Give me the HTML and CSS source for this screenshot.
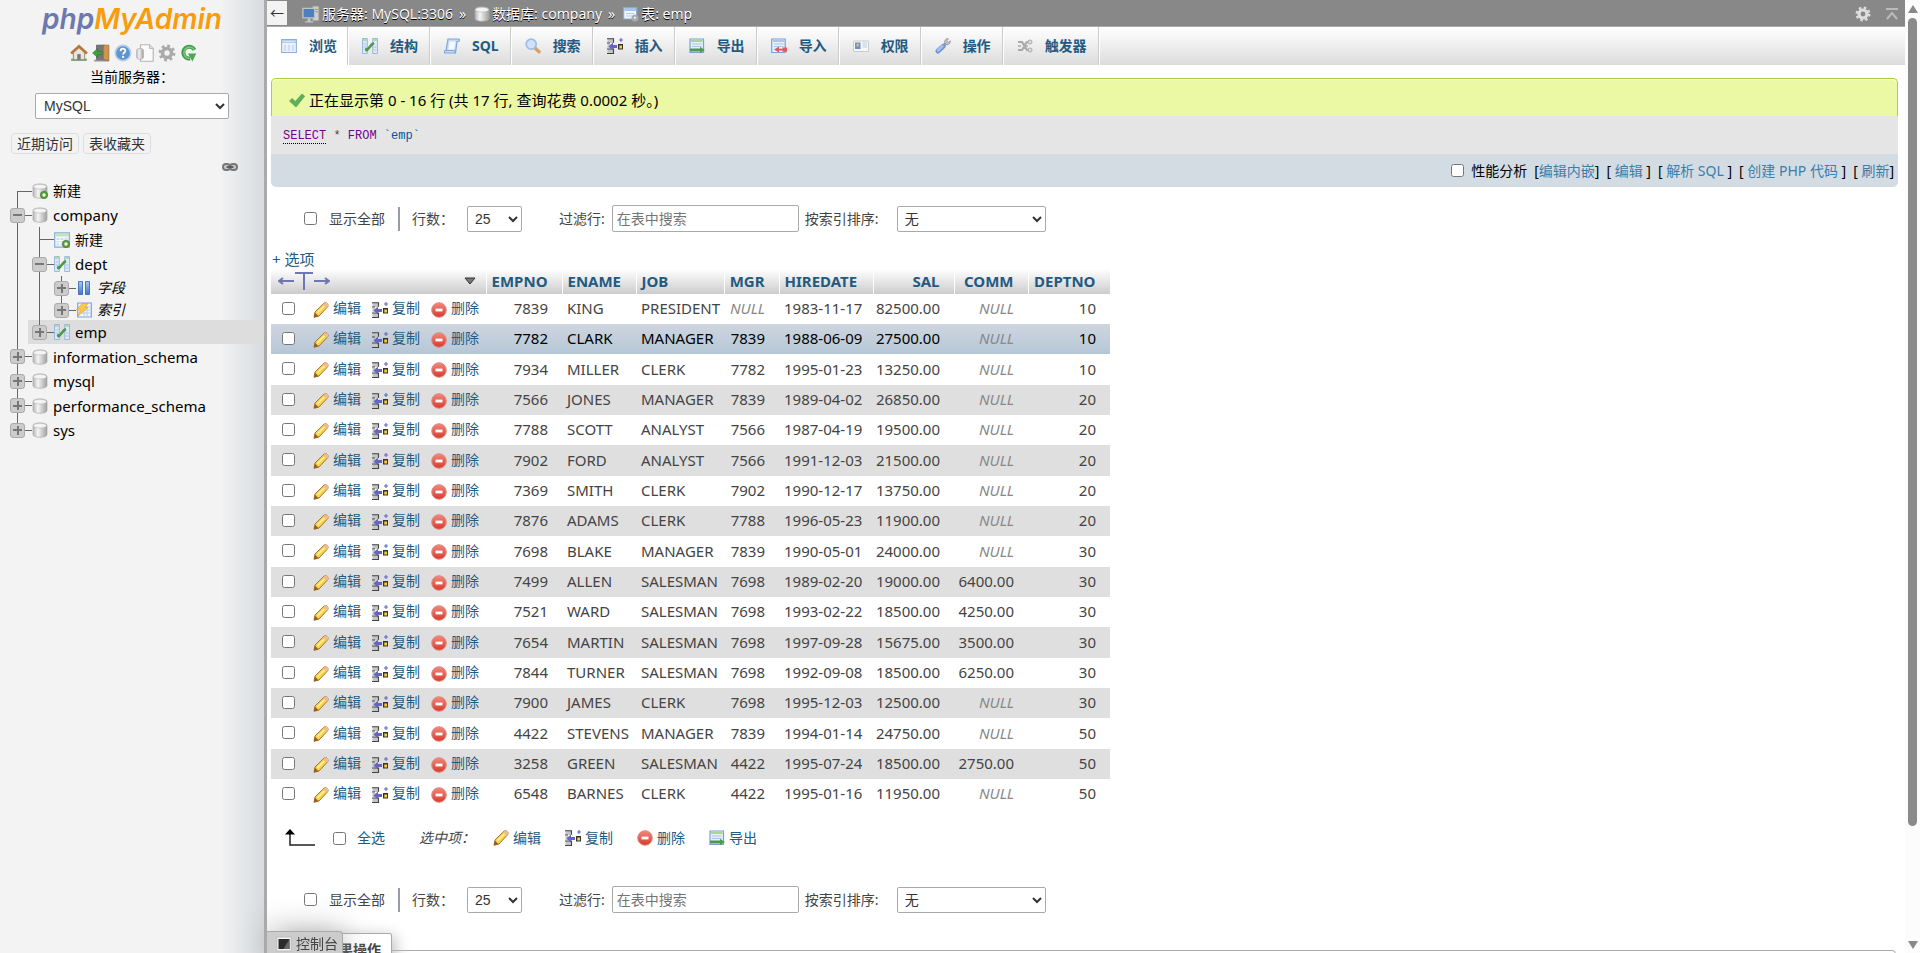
FILE: index.html
```
<!DOCTYPE html>
<html lang="zh-CN">

<head>
  <meta charset="UTF-8">
  <meta name="viewport" content="width=device-width, initial-scale=1.0">
  <title>MySQL / company / emp | phpMyAdmin</title>
  <link rel="stylesheet" href="styles.css">
</head>

<body>
  <svg class="sprite" aria-hidden="true">
    <defs>
      <linearGradient id="g-cyl" x1="0" x2="1" y1="0" y2="0">
        <stop offset="0" stop-color="#b5b5b5"/><stop offset=".35" stop-color="#f4f4f4"/><stop offset="1" stop-color="#a0a0a0"/>
      </linearGradient>
      <linearGradient id="g-blue" x1="0" x2="0" y1="0" y2="1">
        <stop offset="0" stop-color="#a9c9f2"/><stop offset="1" stop-color="#3f78c4"/>
      </linearGradient>
      <linearGradient id="g-red" x1="0" x2="0" y1="0" y2="1">
        <stop offset="0" stop-color="#f08a7c"/><stop offset="1" stop-color="#d9382c"/>
      </linearGradient>
    </defs>
    <symbol id="i-home" viewBox="0 0 16 16">
      <path d="M1 15h14v-2H1z" fill="#6fa85a"/>
      <path d="M3 7.500 8 3l5 4.500V14H3z" fill="#e8e4de" stroke="#8c8378" stroke-width=".8"/>
      <path d="M6.500 9h3v5h-3z" fill="#777"/>
      <path d="M1 8.500 8 2l7 6.500" fill="none" stroke="#b8763a" stroke-width="2.400"/>
    </symbol>
    <symbol id="i-exit" viewBox="0 0 16 16">
      <path d="M4 1h7v13H4z" fill="#777" stroke="#555" stroke-width=".6"/>
      <path d="M2 14h13v1.500H2z" fill="#8d8d8d"/>
      <path d="M10 1h5v14l-5-1.500z" fill="#d3924f" stroke="#9c6228" stroke-width=".6"/>
      <path d="M.5 8 5 4v2.500h4v3H5V12z" fill="#3da23d" stroke="#28762a" stroke-width=".5"/>
    </symbol>
    <symbol id="i-help" viewBox="0 0 16 16">
      <circle cx="8" cy="8" r="6.800" fill="#5f94d3" stroke="#b4cdea" stroke-width="1.400"/>
      <path d="M5.800 6.300c.2-3 4.600-2.600 4.200 0-.2 1.300-1.900 1.300-1.900 3" fill="none" stroke="#fff" stroke-width="1.600"/>
      <circle cx="8.100" cy="11.500" r="1" fill="#fff"/>
    </symbol>
    <symbol id="i-docs" viewBox="0 0 16 16">
      <path d="M4 .7h8l3.300 3.300v11.300H4z" fill="#fbfbfb" stroke="#b5b5b5"/>
      <path d="M12 .7V4h3.300" fill="#ddd" stroke="#b5b5b5" stroke-width=".8"/>
      <path d="M.6 5.500c0-2 6-2 6 0V12c0 2-6 2-6 0z" fill="url(#g-cyl)" stroke="#aaa" stroke-width=".6"/>
    </symbol>
    <symbol id="i-gear" viewBox="0 0 16 16">
      <circle cx="8" cy="8" r="6.200" fill="none" stroke="currentColor" stroke-width="2.600" stroke-dasharray="2.435 2.435"/>
      <circle cx="8" cy="8" r="4" fill="none" stroke="currentColor" stroke-width="3.200"/>
    </symbol>
    <symbol id="i-reload" viewBox="0 0 16 16">
      <path d="M12.800 5.200A5.200 5.200 0 1 0 9 12.800" fill="none" stroke="#3f9b49" stroke-width="3.600"/>
      <path d="M12.600 5A5 5 0 1 0 8.500 12.800" fill="none" stroke="#7cc67a" stroke-width="1.400"/>
      <path d="M7 8.500h7.500L11 15.500z" fill="#4ea653"/>
    </symbol>
    <symbol id="i-link" viewBox="0 0 16 10">
      <rect x="1" y="2" width="7" height="6" rx="3" fill="#ccc" stroke="#777" stroke-width="2"/>
      <rect x="8" y="2" width="7" height="6" rx="3" fill="#ccc" stroke="#777" stroke-width="2"/>
      <path d="M4.500 5h7" stroke="#555" stroke-width="1.800"/>
    </symbol>
    <symbol id="i-db" viewBox="0 0 16 16">
      <path d="M1 3.500c0-3.500 14-3.500 14 0v9c0 3.700-14 3.700-14 0z" fill="url(#g-cyl)" stroke="#aaa" stroke-width=".7"/>
      <ellipse cx="8" cy="3.700" rx="6.500" ry="2.300" fill="#f4f4f4" stroke="#bbb" stroke-width=".6"/>
    </symbol>
    <symbol id="i-plus" viewBox="0 0 16 16">
      <circle cx="12" cy="12" r="3.700" fill="#5c9a3c" stroke="#3f7526" stroke-width=".6"/>
      <circle cx="12" cy="12" r="1.700" fill="#f1f8ea"/>
    </symbol>
    <symbol id="i-table" viewBox="0 0 16 16">
      <path d="M.7 .8h14.600v14.400H.7z" fill="#f4f8fd" stroke="#86aadb" stroke-width="1.200"/>
      <path d="M1.300 1.500h13.400V4.500H1.300z" fill="#c5e2b8"/>
      <path d="M2.500 6h11v7.500h-11z" fill="#cfdff2"/>
      <path d="M2.500 8.500h11M2.500 11h11M6 6v7.500M10 6v7.500" stroke="#fff" stroke-width=".9"/>
    </symbol>
    <symbol id="i-browse" viewBox="0 0 16 16">
      <path d="M.7 1.500h14.600v13H.7z" fill="#fff" stroke="#8caedb" stroke-width="1.200"/>
      <path d="M1.300 2.200h13.400v3H1.300z" fill="#a5c4ec"/>
      <path d="M2.500 6.500h3v7h-3zM6.500 6.500h3v7h-3zM10.500 6.500h3v7h-3z" fill="#cddff4"/>
      <path d="M2.500 3.700h11" stroke="#e4eefa"/>
    </symbol>
    <symbol id="i-struct" viewBox="0 0 16 16">
      <path d="M.5 .5h4.800v15H.5zM10.700 .5h4.800v15h-4.800z" fill="#dce9f8" stroke="#94b3de" stroke-width=".9"/>
      <path d="M1 2h4M11 2h4" stroke="#b5d9a8" stroke-width="2"/>
      <path d="M1.500 6h3M1.500 9h3M11.500 9h3M11.500 12h3" stroke="#a9c2e4"/>
      <path d="M4 12c3 .5 4-5.500 8-7" fill="none" stroke="#4c9a50" stroke-width="2.600"/>
      <circle cx="4.700" cy="11.600" r="1.900" fill="#4c9a50"/>
    </symbol>
    <symbol id="i-cols" viewBox="0 0 16 16">
      <path d="M2.500 1.500h4v13h-4zM9.500 1.500h4v13h-4z" fill="url(#g-blue)" stroke="#2f62b3" stroke-width=".8"/>
    </symbol>
    <symbol id="i-index" viewBox="0 0 16 16">
      <path d="M1.700 1h13.600v14H1.700z" fill="#f1f6fd" stroke="#7ca4dc" stroke-width="1.200"/>
      <path d="M4 5h10M4 8h10M4 11h10M8 4v10M11 4v10" stroke="#b6cce9"/>
      <path d="M6 1.500h6L9 5.500h3L2 14l2.500-6H.5z" fill="#fbc94a" stroke="#e09a2b" stroke-width=".6"/>
    </symbol>
    <symbol id="i-server" viewBox="0 0 16 16">
      <path d="M9.500 1H15v13H9.500z" fill="#cfcfcf" stroke="#999" stroke-width=".7"/>
      <path d="M11 4h3M11 6h3" stroke="#8a8a8a"/>
      <path d="M.8 3h10.500v8.500H.8z" fill="#4b7fc4" stroke="#c4c4c4" stroke-width="1.200"/>
      <path d="M5 12h2.500v2.500H10v1H2.800v-1H5z" fill="#c5c5c5"/>
    </symbol>
    <symbol id="i-props" viewBox="0 0 16 16">
      <path d="M.7 1.500h13v11.500H.7z" fill="#f4f8fd" stroke="#86aadb" stroke-width="1.200"/>
      <path d="M1.300 2h11.800v3H1.300z" fill="#a5c4ec"/>
      <path d="M3 7.500h8M3 10h6" stroke="#b3cbe8"/>
      <circle cx="12" cy="12" r="2.400" fill="none" stroke="#aaa" stroke-width="2.200"/>
    </symbol>
    <symbol id="i-sql" viewBox="0 0 16 16">
      <path d="M4 1h10.500c1.500 0 1.200 2.500-.5 2.500h-1L11.500 15H1.500C0 15 0 12.500 1.500 12.500H2z" fill="#c5dbf6" stroke="#7ea6de" stroke-width="1.200"/>
      <path d="M2 12.500h8c1.500 0 1.500 2.500 0 2.500" fill="none" stroke="#7ea6de"/>
      <path d="M5.500 3.500h6l-1.300 8H4.300z" fill="#f5f9fe"/>
    </symbol>
    <symbol id="i-search" viewBox="0 0 16 16">
      <path d="m10 10 4 3.800" stroke="#d9a066" stroke-width="3.400" stroke-linecap="round"/>
      <circle cx="6.200" cy="6.200" r="5" fill="#cfe2f8" stroke="#9cbce4" stroke-width="1.700"/>
    </symbol>
    <symbol id="i-insert" viewBox="0 0 16 16">
      <path d="M.5.5H7V5H.5zM.5 11H7v4.500H.5zM.5 6h3v4h-3z" fill="#c4c4c4"/>
      <path d="M0 .7h6.500v4M0 5h3M0 11h6.500v4.500H0" fill="none" stroke="#444" stroke-width="1.100"/>
      <path d="M1.500 8.500 6 4.500V7h4v3H6v2.500z" fill="#6463cc"/>
      <path d="M11 6h5v5.500h-5z" fill="#333"/>
      <path d="M12.300 7.500H15v3h-2.700z" fill="#fc3"/>
      <path d="M14 0v4M12 2h4" stroke="#6463cc" stroke-width="1.100"/>
    </symbol>
    <symbol id="i-export" viewBox="0 0 16 16">
      <path d="M1 1h13.500v13.500H1z" fill="#e6effa" stroke="#7ba1d6" stroke-width="1.200"/>
      <path d="M2 2h11.500v2H2z" fill="#a9d59a"/>
      <path d="M3 6h9.500M3 8.500h9.500" stroke="#aac4e6" stroke-width="1.200"/>
      <path d="M1 10.500h10V8.800l4.700 3.200-4.700 3.200v-1.700H1z" fill="#4d9a4b"/>
    </symbol>
    <symbol id="i-import" viewBox="0 0 16 16">
      <path d="M.7 1h13.500v13.500H.7z" fill="#e6effa" stroke="#7ba1d6" stroke-width="1.200"/>
      <path d="M2 2h11v2H2z" fill="#a9c6ec"/>
      <path d="M3 6h9.500M3 8.500h9.500" stroke="#aac4e6" stroke-width="1.200"/>
      <path d="M16 9.500h-4.500v1.200H8V8.500L3 11.500l5 3v-2h3.500v1.200H16z" fill="#e9555c"/>
    </symbol>
    <symbol id="i-rights" viewBox="0 0 16 16">
      <path d="M.5 3h15v10.500H.5z" fill="#f7f7f7" stroke="#ccc"/>
      <path d="M2 4.500h5.500v6.500H2z" fill="#5f95d6"/>
      <circle cx="4.700" cy="7" r="1.500" fill="#e3b184"/>
      <path d="M9.500 5h4.500M9.500 7h4.500M9.500 9h4.500" stroke="#b9d0ec" stroke-width="1.200"/>
    </symbol>
    <symbol id="i-wrench" viewBox="0 0 16 16">
      <path d="M8 8.500 12 4" stroke="#9c9c9c" stroke-width="3"/>
      <path d="M9.500 4.500c0-3 2.500-4.500 4-3.700L11.700 3l1.500 1.500 2.100-1.700c.6 2-1.300 4.300-4 3.900z" fill="#c2c2c2" stroke="#8e8e8e" stroke-width=".7"/>
      <path d="M3 13 8 8.500" stroke="#6d93d8" stroke-width="5" stroke-linecap="round"/>
      <path d="M3 12.500 7.500 8.200" stroke="#a8c2ee" stroke-width="2.500" stroke-linecap="round"/>
    </symbol>
    <symbol id="i-trigger" viewBox="0 0 16 16">
      <path d="M1 4h4l5 8h4M1 12h4l2-3M8 6.500 10 4h4" fill="none" stroke="#aaa" stroke-width="2.200"/>
      <circle cx="13" cy="4" r="2" fill="#ddd" stroke="#aaa"/>
      <circle cx="13" cy="12" r="2" fill="#ddd" stroke="#aaa"/>
      <path d="M1 8h3M8 8h3" stroke="#aaa" stroke-width="1.500"/>
    </symbol>
    <symbol id="i-ok" viewBox="0 0 16 16">
      <path d="m.5 9 2.700-2.500L6.300 9.500 13 2l2.700 2.200L7 15z" fill="#5fb15c" stroke="#4a9448" stroke-width=".6"/>
    </symbol>
    <symbol id="i-edit" viewBox="0 0 16 16">
      <path d="M1 15.300 2 10 11 1.200c2.200-1.500 5 1 3.700 3.500L6 14z" fill="#f7d448" stroke="#a9702c" stroke-width="1"/>
      <path d="M10.300 2.300 13.800 5.800 15 4c.8-2-1.500-4-3.300-2.900z" fill="#f0bb93"/>
      <path d="M4.500 10.800 11.300 4" stroke="#fdf0a5" stroke-width="1.600"/>
      <path d="M1 15.300 2 10.800 5.500 14.200z" fill="#8f5c2d"/>
    </symbol>
    <symbol id="i-drop" viewBox="0 0 16 16">
      <circle cx="8" cy="8" r="7.300" fill="url(#g-red)" stroke="#e08a80" stroke-width="1"/>
      <path d="M4.500 6.600h7v2.800h-7z" fill="#fff"/>
    </symbol>
    <symbol id="i-console" viewBox="0 0 16 16">
      <path d="M.8 1h14.400v14H.8z" fill="#f4f4f4" stroke="#bbb"/>
      <path d="M2.500 3h11v10h-11z" fill="#2b2b2b"/>
      <path d="M13.500 3v10h-6z" fill="#666"/>
    </symbol>
  </svg>

  <div class="page">
    <aside class="sidebar">
      <a class="logo" href="#"><span class="logo__php">php</span>MyAdmin</a>
      <nav class="shortcuts">
        <a href="#" title="主页"><svg class="icon icon--lg"><use href="#i-home"/></svg></a>
        <a href="#" title="退出"><svg class="icon icon--lg"><use href="#i-exit"/></svg></a>
        <a href="#" title="文档"><svg class="icon icon--lg"><use href="#i-help"/></svg></a>
        <a href="#" title="MySQL 文档"><svg class="icon icon--lg"><use href="#i-docs"/></svg></a>
        <a href="#" title="设置"><svg class="icon icon--lg icon--grey"><use href="#i-gear"/></svg></a>
        <a href="#" title="刷新"><svg class="icon icon--lg"><use href="#i-reload"/></svg></a>
      </nav>
      <label class="server-label" for="server">当前服务器：</label>
      <select class="select server-select" id="server">
        <option>MySQL</option>
      </select>
      <div class="quick">
        <button class="quick__btn">近期访问</button>
        <button class="quick__btn">表收藏夹</button>
      </div>
      <a class="unlink" href="#" title="取消与主面板的链接"><svg class="icon--link"><use href="#i-link"/></svg></a>

      <ul class="tree">
        <li class="node node--new"><span class="gut gut--first"></span><svg class="icon"><use href="#i-db"/><use href="#i-plus"/></svg><a href="#">新建</a></li>
        <li class="node"><span class="gut"><button class="toggle toggle--open"></button></span><svg class="icon"><use href="#i-db"/></svg><a href="#">company</a></li>
        <li class="node node--new node--tall"><span class="gut gut--pass"></span><span class="gut"></span><svg class="icon"><use href="#i-table"/><use href="#i-plus"/></svg><a href="#">新建</a></li>
        <li class="node"><span class="gut gut--pass"></span><span class="gut"><button class="toggle toggle--open"></button></span><svg class="icon"><use href="#i-struct"/></svg><a href="#">dept</a></li>
        <li class="node node--group"><span class="gut gut--pass"></span><span class="gut gut--pass"></span><span class="gut"><button class="toggle"></button></span><svg class="icon"><use href="#i-cols"/></svg><a href="#">字段</a></li>
        <li class="node node--group node--short"><span class="gut gut--pass"></span><span class="gut gut--pass"></span><span class="gut gut--last"><button class="toggle"></button></span><svg class="icon"><use href="#i-index"/></svg><a href="#">索引</a></li>
        <li class="node node--active"><span class="gut gut--pass"></span><span class="gut gut--last"><button class="toggle"></button></span><svg class="icon"><use href="#i-struct"/></svg><a href="#">emp</a></li>
        <li class="node node--tall"><span class="gut"><button class="toggle"></button></span><svg class="icon"><use href="#i-db"/></svg><a href="#">information_schema</a></li>
        <li class="node"><span class="gut"><button class="toggle"></button></span><svg class="icon"><use href="#i-db"/></svg><a href="#">mysql</a></li>
        <li class="node node--tall"><span class="gut"><button class="toggle"></button></span><svg class="icon"><use href="#i-db"/></svg><a href="#">performance_schema</a></li>
        <li class="node"><span class="gut gut--last"><button class="toggle"></button></span><svg class="icon"><use href="#i-db"/></svg><a href="#">sys</a></li>
      </ul>
    </aside>

    <main class="main">
      <header class="topbar">
        <button class="collapse" title="隐藏面板">←</button>
        <div class="crumbs">
          <svg class="icon icon--lg"><use href="#i-server"/></svg><a href="#">服务器: MySQL:3306</a>
          <span class="crumbs__sep">»</span>
          <svg class="icon"><use href="#i-db"/></svg><a href="#">数据库: company</a>
          <span class="crumbs__sep">»</span>
          <svg class="icon"><use href="#i-props"/></svg><a href="#">表: emp</a>
        </div>
        <a class="topbar__gear" href="#" title="页面设置"><svg class="icon"><use href="#i-gear"/></svg></a>
        <a class="topbar__up" href="#" title="返回顶部"><svg class="icon--up" viewBox="0 0 12 12"><path d="M0 1h12M1 11l5-6 5 6" fill="none" stroke="currentColor" stroke-width="2"/></svg></a>
      </header>

      <nav class="tabs">
        <a class="tab tab--active" href="#"><svg class="icon"><use href="#i-browse"/></svg>浏览</a>
        <a class="tab" href="#"><svg class="icon"><use href="#i-struct"/></svg>结构</a>
        <a class="tab" href="#"><svg class="icon"><use href="#i-sql"/></svg>SQL</a>
        <a class="tab" href="#"><svg class="icon"><use href="#i-search"/></svg>搜索</a>
        <a class="tab" href="#"><svg class="icon"><use href="#i-insert"/></svg>插入</a>
        <a class="tab" href="#"><svg class="icon"><use href="#i-export"/></svg>导出</a>
        <a class="tab" href="#"><svg class="icon"><use href="#i-import"/></svg>导入</a>
        <a class="tab" href="#"><svg class="icon"><use href="#i-rights"/></svg>权限</a>
        <a class="tab" href="#"><svg class="icon"><use href="#i-wrench"/></svg>操作</a>
        <a class="tab" href="#"><svg class="icon"><use href="#i-trigger"/></svg>触发器</a>
      </nav>

      <div class="content">
        <section class="result">
          <div class="result__msg"><svg class="icon"><use href="#i-ok"/></svg>正在显示第 0 - 16 行 (共 17 行, 查询花费 0.0002 秒。)</div>
          <div class="result__sql"><code><a class="kw kw--doc" href="#">SELECT</a> * <span class="kw">FROM</span> <span class="name">`emp`</span></code></div>
          <div class="result__tools">
            <input type="checkbox" class="check" id="profiling"><label for="profiling">性能分析</label>
            <span>[<a href="#">编辑内嵌</a>]</span>
            <span>[ <a href="#">编辑</a> ]</span>
            <span>[ <a href="#">解析 SQL</a> ]</span>
            <span>[ <a href="#">创建 PHP 代码</a> ]</span>
            <span>[ <a href="#">刷新</a>]</span>
          </div>
        </section>

        <form class="filters">
          <input type="checkbox" class="check" id="all-1"><label class="filters__all" for="all-1">显示全部</label>
          <label class="filters__rows" for="rows-1">行数：</label>
          <select class="select filters__count" id="rows-1"><option>25</option></select>
          <label class="filters__search" for="search-1">过滤行:</label>
          <input type="text" class="filters__text" id="search-1" placeholder="在表中搜索">
          <label class="filters__sort" for="sort-1">按索引排序:</label>
          <select class="select filters__key" id="sort-1"><option>无</option></select>
        </form>

        <a class="options" href="#">+ 选项</a>

        <table class="data">
          <colgroup>
            <col class="w-actions"><col class="w-empno"><col class="w-ename"><col class="w-job"><col class="w-mgr">
            <col class="w-hire"><col class="w-sal"><col class="w-comm"><col class="w-dept">
          </colgroup>
          <thead>
            <tr>
              <th>
                <div class="head-tools">
                  <svg class="t-arrows" viewBox="0 0 52 18"><path d="M1 9h15M5 6 1 9l4 3M17 1h18M26 1v17M36 9h15M47 6l4 3-4 3" fill="none" stroke="#6c78af" stroke-width="2"/></svg>
                  <svg class="sort" viewBox="0 0 12 8"><path d="M1 1h10L6 7z" fill="#777" stroke="#333"/></svg>
                </div>
              </th>
              <th class="num"><a href="#">EMPNO</a></th>
              <th><a href="#">ENAME</a></th>
              <th><a href="#">JOB</a></th>
              <th class="num"><a href="#">MGR</a></th>
              <th><a href="#">HIREDATE</a></th>
              <th class="num"><a href="#">SAL</a></th>
              <th class="num"><a href="#">COMM</a></th>
              <th class="num"><a href="#">DEPTNO</a></th>
            </tr>
          </thead>
          <tbody id="rows"></tbody>
        </table>

        <div class="bulk">
          <svg class="bulk__arrow" viewBox="0 0 32 18"><path d="M6 4v12h25" fill="none" stroke="#222" stroke-width="1.500"/><path d="M1 5.500 6 0l5 5.500z" fill="#000"/></svg>
          <input type="checkbox" class="check" id="check-all"><label class="bulk__all" for="check-all">全选</label>
          <em class="bulk__with">选中项：</em>
          <button class="bulk__btn"><svg class="icon"><use href="#i-edit"/></svg>编辑</button>
          <button class="bulk__btn"><svg class="icon"><use href="#i-insert"/></svg>复制</button>
          <button class="bulk__btn"><svg class="icon"><use href="#i-drop"/></svg>删除</button>
          <button class="bulk__btn"><svg class="icon"><use href="#i-export"/></svg>导出</button>
        </div>

        <form class="filters">
          <input type="checkbox" class="check" id="all-2"><label class="filters__all" for="all-2">显示全部</label>
          <label class="filters__rows" for="rows-2">行数：</label>
          <select class="select filters__count" id="rows-2"><option>25</option></select>
          <label class="filters__search" for="search-2">过滤行:</label>
          <input type="text" class="filters__text" id="search-2" placeholder="在表中搜索">
          <label class="filters__sort" for="sort-2">按索引排序:</label>
          <select class="select filters__key" id="sort-2"><option>无</option></select>
        </form>

        <fieldset class="operations">
          <legend>查询结果操作</legend>
        </fieldset>
      </div>

      <button class="console"><svg class="icon"><use href="#i-console"/></svg>控制台</button>
    </main>

    <div class="scroll">
      <span class="scroll__up"></span>
      <span class="scroll__track"><span class="scroll__thumb"></span></span>
      <span class="scroll__down"></span>
    </div>
  </div>

  <script>
    const rows = [
      [7839, 'KING', 'PRESIDENT', null, '1983-11-17', '82500.00', null, 10],
      [7782, 'CLARK', 'MANAGER', 7839, '1988-06-09', '27500.00', null, 10],
      [7934, 'MILLER', 'CLERK', 7782, '1995-01-23', '13250.00', null, 10],
      [7566, 'JONES', 'MANAGER', 7839, '1989-04-02', '26850.00', null, 20],
      [7788, 'SCOTT', 'ANALYST', 7566, '1987-04-19', '19500.00', null, 20],
      [7902, 'FORD', 'ANALYST', 7566, '1991-12-03', '21500.00', null, 20],
      [7369, 'SMITH', 'CLERK', 7902, '1990-12-17', '13750.00', null, 20],
      [7876, 'ADAMS', 'CLERK', 7788, '1996-05-23', '11900.00', null, 20],
      [7698, 'BLAKE', 'MANAGER', 7839, '1990-05-01', '24000.00', null, 30],
      [7499, 'ALLEN', 'SALESMAN', 7698, '1989-02-20', '19000.00', '6400.00', 30],
      [7521, 'WARD', 'SALESMAN', 7698, '1993-02-22', '18500.00', '4250.00', 30],
      [7654, 'MARTIN', 'SALESMAN', 7698, '1997-09-28', '15675.00', '3500.00', 30],
      [7844, 'TURNER', 'SALESMAN', 7698, '1992-09-08', '18500.00', '6250.00', 30],
      [7900, 'JAMES', 'CLERK', 7698, '1995-12-03', '12500.00', null, 30],
      [4422, 'STEVENS', 'MANAGER', 7839, '1994-01-14', '24750.00', null, 50],
      [3258, 'GREEN', 'SALESMAN', 4422, '1995-07-24', '18500.00', '2750.00', 50],
      [6548, 'BARNES', 'CLERK', 4422, '1995-01-16', '11950.00', null, 50]
    ];
    const numeric = [0, 3, 5, 6, 7];
    const actions = [['edit', '编辑'], ['insert', '复制'], ['drop', '删除']];

    function cell(value, i) {
      const cls = numeric.includes(i) ? 'num' : '';
      return `<td class="${cls}">${value === null ? '<i class="null">NULL</i>' : value}</td>`;
    }

    function actionLink([icon, text]) {
      return `<a class="action" href="#"><svg class="icon"><use href="#i-${icon}"/></svg>${text}</a>`;
    }

    document.querySelector('#rows').innerHTML = rows.map((row, i) => `
      <tr class="${i === 1 ? 'marked' : ''}">
        <td><div class="actions">
          <input type="checkbox" class="check" aria-label="${row[0]}">
          ${actions.map(actionLink).join('')}
        </div></td>
        ${row.map(cell).join('')}
      </tr>`).join('');
  </script>
</body>

</html>
```
FILE: styles.css
```
* {
  box-sizing: border-box;
}

body {
  margin: 0;
  font-family: "Noto Sans", "Noto Sans CJK SC", sans-serif;
  font-size: 14px;
  line-height: 20px;
  color: #444;
  background: #fff;
}

a {
  color: #235a81;
  text-decoration: none;
}

button,
input,
select {
  font: inherit;
  color: inherit;
}

.sprite {
  position: absolute;
  width: 0;
  height: 0;
}

.icon {
  display: block;
  flex: none;
  width: 16px;
  height: 16px;
}

.icon--lg {
  width: 18px;
  height: 18px;
}

.icon--grey {
  color: #aaa;
}

.check {
  flex: none;
  width: 13px;
  height: 13px;
  margin: 0;
}

.select {
  height: 26px;
  padding: 0 3px;
  font-family: "Liberation Sans", "Noto Sans CJK SC", sans-serif;
  color: #333;
  background: #fff;
  border: 1px solid #aaa;
  border-radius: 2px;
}

.page {
  display: flex;
  height: 100vh;
  overflow: hidden;
}

/* navigation panel */

.sidebar {
  display: flex;
  flex-direction: column;
  flex: none;
  width: 267px;
  padding-top: 3px;
  background: linear-gradient(to right, #f3f3f3 220px, #d7dbdf 264px);
  border-right: 3px solid #aaa;
  color: #000;
}

.logo {
  align-self: center;
  font-family: Inter, sans-serif;
  font-size: 28px;
  font-style: italic;
  font-weight: 600;
  line-height: 32px;
  color: #f89c0e;
}

.logo__php {
  color: #6c78af;
}

.shortcuts {
  display: flex;
  justify-content: center;
  gap: 4px;
  margin-top: 9px;
  padding-left: 4px;
}

.server-label {
  margin-top: 5px;
  text-align: center;
}

.server-select {
  width: 194px;
  margin: 6px 0 0 35px;
  padding: 0 4px;
}

.quick {
  display: flex;
  gap: 4px;
  margin: 14px 0 0 11px;
}

.quick__btn {
  height: 21px;
  padding: 0 5px;
  line-height: 18px;
  color: #333;
  background: #f3f3f3;
  border: 1px solid #ddd;
  border-radius: 4px;
}

.unlink {
  align-self: flex-end;
  height: 10px;
  margin: 8px 26px 7px 0;
}

.icon--link {
  display: block;
  width: 16px;
  height: 10px;
}

.tree {
  margin: 0;
  padding: 0;
  list-style: none;
}

.node {
  display: flex;
  align-items: center;
  height: 24px;
  padding-left: 10px;
  font-size: 15px;
}

.node--tall {
  height: 25px;
}

.node--short {
  height: 20px;
}

.node--new {
  font-size: 14px;
}

.node--group {
  font-size: 14px;
  font-style: italic;
}

.node--active {
  background: linear-gradient(to right, transparent 28px, #ddd 28px);
}

.node a {
  margin-left: 5px;
  color: #000;
}

/* the connecting lines run through 22px wide gutters, one per level */
.gut {
  display: flex;
  align-items: center;
  align-self: stretch;
  flex: none;
  width: 22px;
  background:
    linear-gradient(#666, #666) 7px 0 / 1px 100% no-repeat,
    linear-gradient(#666, #666) 7px 50% / 15px 1px no-repeat;
}

.gut--pass {
  background: linear-gradient(#666, #666) 7px 0 / 1px 100% no-repeat;
}

.gut--first {
  background:
    linear-gradient(#666, #666) 7px 100% / 1px 50% no-repeat,
    linear-gradient(#666, #666) 7px 50% / 15px 1px no-repeat;
}

.gut--last {
  background:
    linear-gradient(#666, #666) 7px 0 / 1px 50% no-repeat,
    linear-gradient(#666, #666) 7px 50% / 15px 1px no-repeat;
}

.node--group .gut--pass + .gut--pass {
  background: linear-gradient(#666, #666) 7px 0 / 1px 100% no-repeat;
}

.toggle {
  width: 15px;
  height: 15px;
  padding: 0;
  border: 1px solid #aaa;
  border-radius: 3px;
  background:
    linear-gradient(#777, #777) center / 9px 2px no-repeat,
    linear-gradient(#777, #777) center / 2px 9px no-repeat,
    #ccc;
}

.toggle--open {
  background: linear-gradient(#777, #777) center / 9px 2px no-repeat, #ccc;
}

/* main panel */

.main {
  flex: 1;
  min-width: 0;
  overflow: hidden;
}

.topbar {
  display: flex;
  align-items: center;
  height: 26px;
  background: #888;
  color: #fff;
}

.topbar a {
  color: #fff;
}

.collapse {
  width: 20px;
  height: 24px;
  padding: 0;
  border: 0;
  color: #333;
  background: #f3f3f3;
}

.crumbs {
  display: flex;
  align-items: center;
  flex: 1;
  padding-left: 15px;
  padding-top: 2px;
  text-shadow: 0 1px 0 #000;
}

.crumbs a {
  margin-left: 2px;
}

.crumbs__sep {
  margin: 0 8px 0 6px;
}

.topbar .topbar__gear,
.topbar .topbar__up {
  padding-top: 2px;
  color: #ddd;
}

.topbar__up {
  margin: 0 7px 0 15px;
}

.topbar .topbar__up {
  color: #bbb;
}

.icon--up {
  display: block;
  width: 12px;
  height: 12px;
}

.tabs {
  display: flex;
  height: 39px;
  border-top: 1px solid #aaa;
  background: linear-gradient(#fff, #dcdcdc);
}

.tab {
  display: flex;
  align-items: center;
  gap: 12px;
  padding: 0 11px 0 14px;
  font-weight: bold;
  border-right: 1px solid #ccc;
  box-shadow: 1px 0 0 #fff;
}

.tab--active {
  padding-right: 10px;
  background: #fff;
}

.content {
  padding: 13px 7px 0 4px;
}

.result__msg {
  display: flex;
  align-items: center;
  gap: 4px;
  height: 38px;
  padding: 4px 17px 0;
  font-size: 15px;
  color: #000;
  background: #ebf8a4;
  border: 1px solid #a2d246;
  border-bottom: 0;
  border-radius: 5px 5px 0 0;
  box-shadow: inset 0 1px 1px #fff;
}

.result__sql {
  height: 38px;
  padding: 10px 12px;
  background: #e5e5e5;
}

.result__sql code {
  display: block;
  font-family: "Liberation Mono", monospace;
  font-size: 12px;
  line-height: 20px;
}

.kw {
  color: #708;
}

.kw--doc {
  border-bottom: 1px dotted #000;
}

.name {
  color: #05a;
}

.result__tools {
  display: flex;
  align-items: center;
  justify-content: flex-end;
  gap: 7px;
  height: 33px;
  padding: 0 4px;
  color: #000;
  background: #d3dce3;
  border-radius: 0 0 5px 5px;
}

.result__tools a {
  color: #3a7ead;
}

.filters {
  display: flex;
  align-items: center;
  margin: 18px 0 17px 33px;
}

.filters__all {
  margin: 0 13px 0 12px;
}

.filters__rows {
  width: 69px;
  padding-left: 12px;
  border-left: 2px solid #99a;
  line-height: 24px;
}

.filters__count {
  width: 55px;
}

.filters__search {
  margin: 0 7px 0 37px;
}

.filters__text {
  width: 187px;
  height: 27px;
  padding: 0 4px;
  border: 1px solid #aaa;
  border-radius: 2px;
}

.filters__text::placeholder {
  color: #757575;
}

.filters__sort {
  width: 92px;
  margin-left: 6px;
}

.filters__key {
  width: 149px;
}

.options {
  display: block;
  padding-left: 1px;
  font-size: 15px;
  line-height: 20px;
}

.data {
  width: 839px;
  table-layout: fixed;
  border-collapse: collapse;
  font-size: 15px;
}

.w-actions { width: 215px; }
.w-empno { width: 76px; }
.w-ename { width: 74px; }
.w-job { width: 88px; }
.w-mgr { width: 55px; }
.w-hire { width: 94px; }
.w-sal { width: 81px; }
.w-comm { width: 74px; }
.w-dept { width: 82px; }

.data th,
.data td {
  padding: 0 0 2px 5px;
  text-align: left;
  white-space: nowrap;
}

.data th {
  height: 25px;
  background: linear-gradient(#fff, #ccc);
  border-right: 1px solid #fff;
}

.data .num {
  padding: 0 14px 2px 0;
  text-align: right;
}

.data tbody tr {
  height: 30px;
}

.data tbody tr:nth-child(3n) {
  height: 31px;
}

.data tbody tr:nth-child(even) {
  background: #dfdfdf;
}

.data tbody .marked:nth-child(even) {
  color: #000;
  background: linear-gradient(#ced6df, #b6c6d7);
}

.head-tools {
  display: flex;
  align-items: center;
  justify-content: space-between;
  padding: 0 10px 0 2px;
}

.t-arrows {
  width: 52px;
  height: 18px;
}

.sort {
  width: 12px;
  height: 8px;
}

.actions {
  display: flex;
  align-items: center;
  padding-left: 6px;
  font-size: 14px;
}

.actions .check {
  margin-right: 18px;
}

.action {
  display: flex;
  align-items: center;
  gap: 4px;
  margin-right: 11px;
}

.action .icon {
  margin-top: 3px;
}

.null {
  color: #888;
}

.bulk {
  display: flex;
  align-items: center;
  height: 26px;
  margin: 16px 0 35px;
  padding-left: 13px;
}

.bulk__arrow {
  width: 32px;
  height: 18px;
  margin-right: 17px;
}

.bulk__all {
  margin: 0 34px 0 11px;
  color: #235a81;
}

.bulk__with {
  margin-right: 18px;
}

.bulk__btn {
  display: flex;
  align-items: center;
  gap: 4px;
  margin-right: 24px;
  padding: 0;
  color: #235a81;
  background: none;
  border: 0;
}

.operations {
  height: 80px;
  margin: 20px 2px 0 0;
  padding: 0 14px;
  border: 1px solid #aaa;
  border-radius: 4px;
}

.operations legend {
  padding: 6px 10px;
  font-weight: bold;
  background: #fff;
  border: 1px solid #aaa;
  border-radius: 2px;
  box-shadow: 3px 3px 15px #bbb;
}

/* stays over the bottom edge of the main panel */
.console {
  position: fixed;
  bottom: 0;
  display: flex;
  align-items: center;
  gap: 4px;
  height: 22px;
  padding: 2px 4px 0 9px;
  color: #444;
  background: #ccc;
  border: 1px solid #aaa;
  border-width: 1px 1px 0 0;
  border-radius: 0 4px 0 0;
  box-shadow: 0 0 30px #aaa;
}

.scroll {
  display: flex;
  flex-direction: column;
  align-items: center;
  flex: none;
  width: 15px;
  padding: 5px 0 4px;
  background: #fcfcfc;
}

.scroll__up,
.scroll__down {
  border: 5px solid transparent;
}

.scroll__up {
  border-top: 0;
  border-bottom: 8px solid #888;
}

.scroll__down {
  border-bottom: 0;
  border-top: 8px solid #888;
}

.scroll__track {
  flex: 1;
  width: 9px;
  padding: 5px 0;
}

.scroll__thumb {
  display: block;
  height: 88%;
  background: #8a8a8a;
  border-radius: 5px;
}
```
